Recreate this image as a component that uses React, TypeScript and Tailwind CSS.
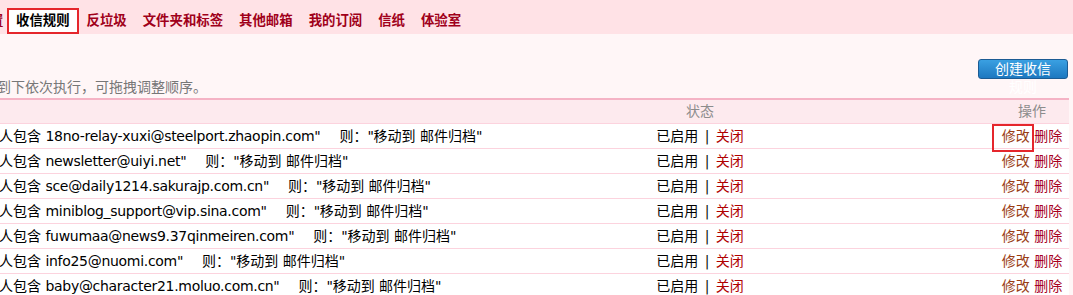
import React from "react";

const tabs = ["反垃圾", "文件夹和标签", "其他邮箱", "我的订阅", "信纸", "体验室"];

const rules = [
  "18no-relay-xuxi@steelport.zhaopin.com",
  "newsletter@uiyi.net",
  "sce@daily1214.sakurajp.com.cn",
  "miniblog_support@vip.sina.com",
  "fuwumaa@news9.37qinmeiren.com",
  "info25@nuomi.com",
  "baby@character21.moluo.com.cn",
];

function RuleRow({ sender }: { sender: string }) {
  return (
    <div className="grid grid-cols-[600px_200px_195px_74px] h-[25px] items-center bg-white border-b border-[#fcd3de] text-black whitespace-nowrap">
      <div className="overflow-hidden">
        <span className="-ml-[1px]">
          人包含 <span className="tracking-[-0.3px]">{sender}"</span>
        </span>
        <span className="ml-[19px]">
          则：<span className="tracking-[-0.3px]">"</span>移动到 邮件归档<span className="tracking-[-0.3px]">"</span>
        </span>
      </div>
      <div className="text-center">
        已启用 <span className="text-[#111] mx-[2px]">|</span> <span className="text-[#b00000]">关闭</span>
      </div>
      <div />
      <div className="text-center">
        <span className="text-[#9a3d14]">修改</span> <span className="text-[#a8001f]">删除</span>
      </div>
    </div>
  );
}

export default function App() {
  return (
    <div className="relative w-[1073px] h-[295px] overflow-hidden bg-[#fff6f7] font-['DejaVu_Sans','Noto_Sans_CJK_SC',sans-serif] text-[14px]">
      {/* tabs */}
      <nav className="flex items-end h-[34px] bg-[#ffe2e6] font-bold text-[13.4px] text-[#a0001a] whitespace-nowrap">
        <span className="-ml-[10px] w-[13px] leading-[22px] mb-[2px]">置</span>
        <span className="ml-[4px] h-[26px] leading-[22px] px-[7px] border-2 border-[#e5262c] bg-white text-black">
          收信规则
        </span>
        {tabs.map((t) => (
          <span key={t} className="h-[26px] leading-[22px] px-[6px] border-2 border-transparent">
            {t}
          </span>
        ))}
      </nav>

      {/* toolbar */}
      <div className="flex justify-end pt-[25px] pr-[5px]">
        <div className="w-[90px] h-[20px] rounded-[3px] border border-[#1c5b93] bg-linear-to-b from-[#3aa0e2] to-[#1d78c0] text-white text-[14px] leading-[18px] px-[12px] text-center">
          创建收信规则
        </div>
      </div>
      <p className="-ml-[3px] h-[19px] leading-[16px] text-[#777] whitespace-nowrap">
        到下依次执行，可拖拽调整顺序。
      </p>

      {/* rules table */}
      <div className="w-[1069px] border-t-2 border-[#f5b3c5]">
        <div className="grid grid-cols-[600px_200px_195px_74px] h-[24px] items-center bg-[#fdeaee] border-b border-[#fcd3de] text-[#8c8c8c]">
          <div />
          <div className="text-center">状态</div>
          <div />
          <div className="text-center">操作</div>
        </div>
        {rules.map((r) => (
          <RuleRow key={r} sender={r} />
        ))}
      </div>

      {/* highlight over first edit link */}
      <div className="absolute left-[992px] top-[124px] w-[42px] h-[28px] border-2 border-[#e5262c]" />
    </div>
  );
}
